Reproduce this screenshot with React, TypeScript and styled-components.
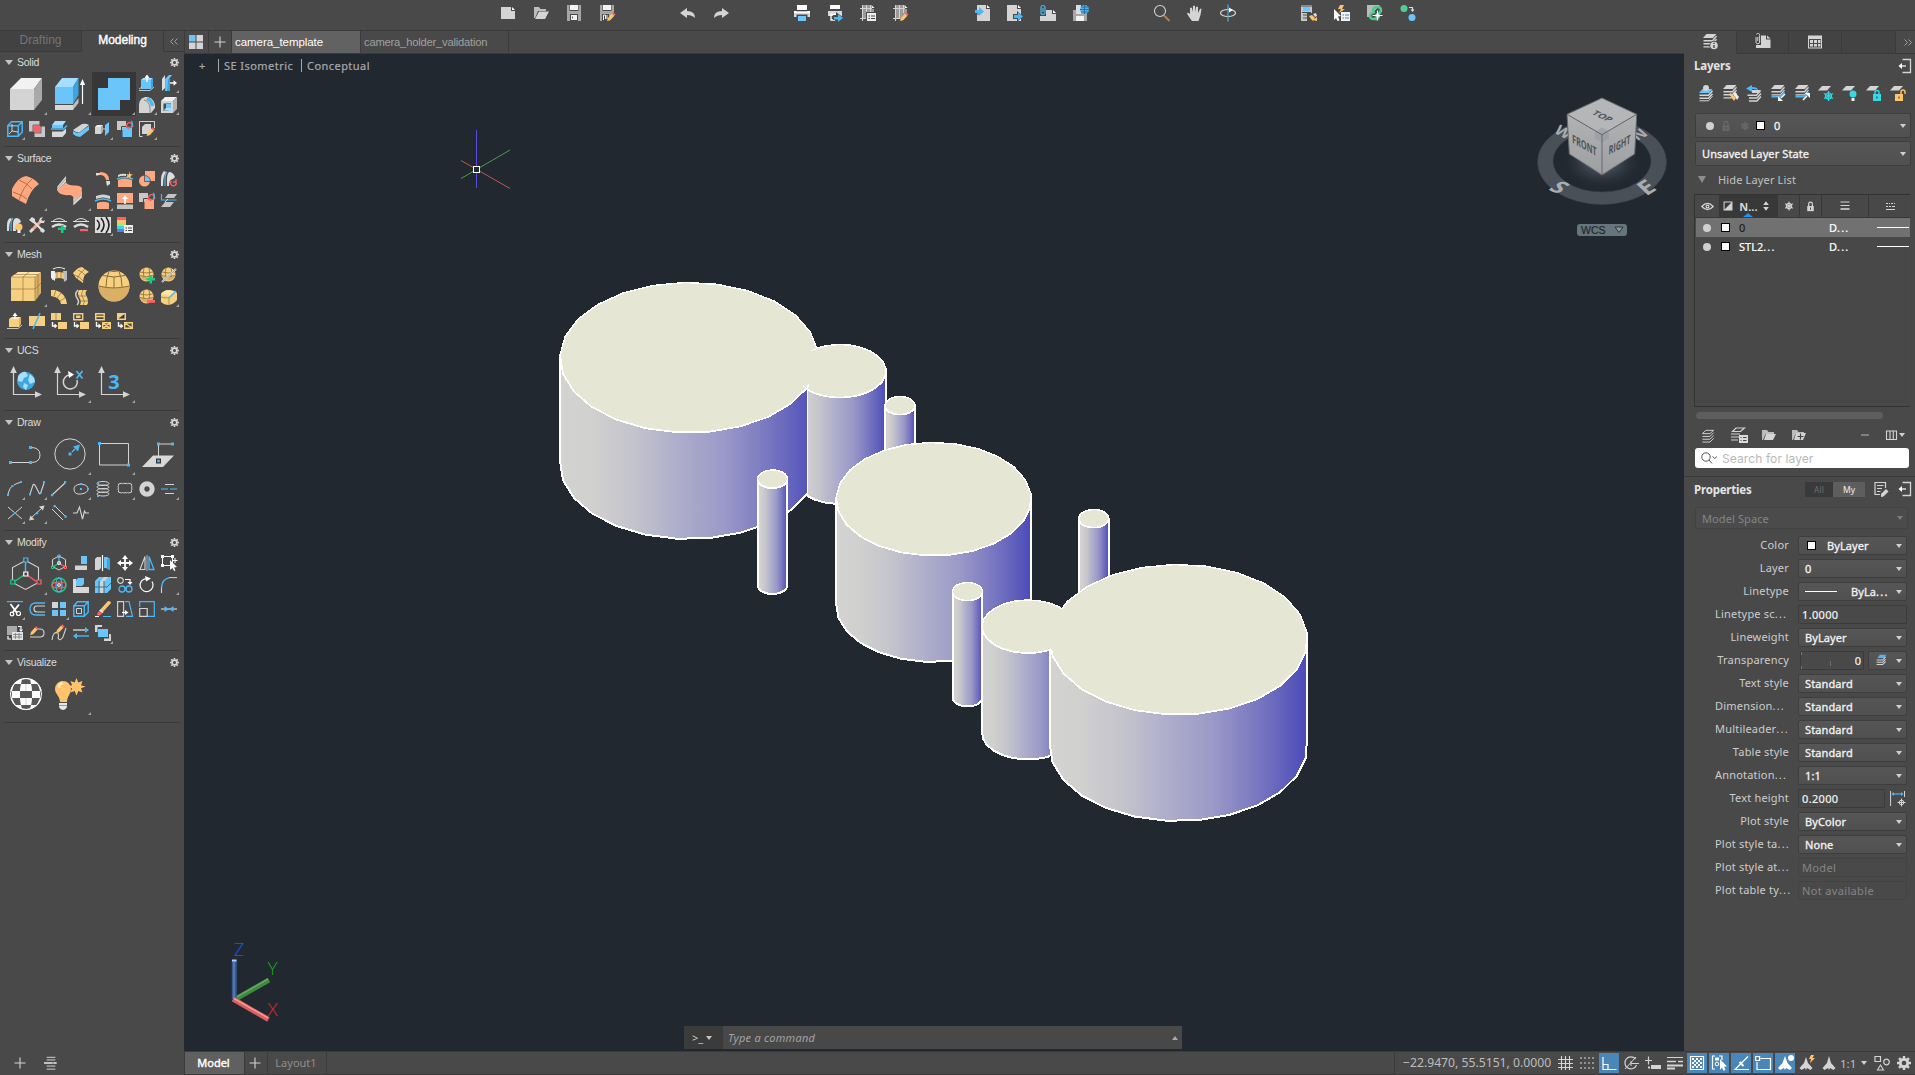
import React from "react";
import styled, { createGlobalStyle, css } from "styled-components";

/* ---------- palette ---------- */
const C = {
  panel: "#494949",
  line: "#3b3b3b",
  canvas: "#212830",
  grey: "#d4d4d4",
  mid: "#a8a8a8",
  white: "#ffffff",
  blue: "#69c5fa",
  sky: "#4bb8f5",
  deep: "#3ba5e0",
  pale: "#a5deff",
  peach: "#ffa87f",
  brown: "#a8664a",
  gold: "#f7cf80",
  goldD: "#d9b066",
  goldL: "#ffe6a8",
  goldS: "#8a6b33",
  red: "#ff5f66",
  green: "#12cf85",
  teal: "#35d8e4",
  amber: "#ffc46b",
};

const LUCIDA = '"Noto Sans", "Open Sans", sans-serif';
const HELV = '"Liberation Sans", Arial, sans-serif';

/* ---------- icon drawing ---------- */
type Shape = [d: string, fill: string, stroke?: string, width?: number];
const f = (d: string, c: string = C.grey): Shape => [d, c];
const s = (d: string, c: string = C.grey, w = 1): Shape => [d, "none", c, w];
const o = (x: number, y: number, r: number, ry: number = r) =>
  `M${x - r} ${y}a${r} ${ry} 0 1 0 ${2 * r} 0a${r} ${ry} 0 1 0 ${-2 * r} 0z`;
const q = (x: number, y: number, w: number, h: number) => `M${x} ${y}h${w}v${h}h${-w}z`;

const sheet = (y: number) => `M4.5 ${y}h10l-3.5 4h-10z`;
const sheetEdge = (y: number) => `M1.5 ${y + 3.8}h9l4-4.6`;
const pencil = (x: number, y: number): Shape[] => [
  f(`M${x} ${y + 8}l1-3 4-4.5 2.4 2.2-4.2 4.5z`, C.amber),
  f(`M${x + 5} ${y + 0.6}l1.2-1.4 2.4 2.2-1.2 1.4z`, C.red),
];
const ball = (): Shape[] => [
  f(o(7.5, 7.5, 7), C.gold),
  f("M1 9a7 7 0 0 0 13 0q-6 2.5-13 0z", C.goldD),
  s("M1 5q6.500 2 13 0M.6 8.500q7 2.500 13.800 0M5 1q-1.500 4 0 9M10 1q1.500 4 0 9", C.goldS, 0.8),
];
const axes = (): Shape[] => [
  s("M3.500 5v23.500h25", C.grey, 1.2),
  f("M3.500 0l3.300 7h-6.600zM32 28.500l-7-3.300v6.600z", C.grey),
];
const swapArrow = (x: string): Shape[] => [s("M10.500 7a3 3 0 1 1 4.500-.5", x, 1.3), f("M9 5.500h3.500v3.500z", C.red)];

const ICONS: Record<string, Shape[]> = {
  /* large 32px */
  box: [f("M0 11L11 0h21l-8 11z", "#f2f2f2"), f("M0 11h24v21H0z", "#d4d4d4"), f("M24 11l8-11v22l-8 10z", "#a9a9a9")],
  extrude: [
    f("M1 27h18v5H1z", "#d8d8d8"), f("M19 27l5.500-7v5l-5.500 7z", "#bdbdbd"),
    f("M1 9L8 0h16.500L19 9z", C.pale), f("M1 9h18v17H1z", C.blue), f("M19 9l5.500-9v17L19 26z", C.deep),
    s("M28.500 4v22", C.white, 1.2), f("M28.500 1l2.600 6h-5.200z", C.white),
  ],
  union: [f("M10 0h22v22h-10v10H0V10h10z", C.blue)],
  patch: [
    f("M2 15Q8 3 16 2q8 2 13 8Q20 16 16 30 8 26 2 22z", C.peach),
    s("M9 6q8 3 13 9M3 18q9 3 14 7M22 5q-9 8-13 21", C.brown, 0.9),
  ],
  loft: [
    f("M3.300 12.500L12 2v6L3.300 17zM19.300 25l8.500-7.500v6.200L19.300 31.500z", C.grey),
    s("M3.500 14.500L12 4.500M19.500 28l8-7.500", "#8a8a8a", 0.6),
    f("M3.300 16.500L12 8.500q2 3 8 3 5-.5 7.800 2v7L19.300 26q1-4.500-4-5-9 1-12-4.500z", C.peach),
  ],
  meshbox: [
    f("M1 7l7-5h23l-6 5z", C.goldL), f("M1 7h24v24H1z", C.gold), f("M25 7l6-5v21l-6 8z", C.goldD),
    s("M1 19h24l6-6M13 31V7l6-5M1 7h24v24M4 4.500h24v22", C.goldS, 0.6),
  ],
  meshball: [
    f(o(16, 16, 15.500), C.gold), f("M.5 16a15.500 15.500 0 0 0 31 0q-15 5-31 0z", C.goldD),
    s("M5 5.500q11 3 22 0M.7 16q15 4 30.600 0M11 1.500Q8 8 8 17M21 1.500q3 6.500 3 15.500M16 7v11M12 1q4 1 8 0", C.goldS, 1),
  ],
  ucsworld: [
    ...axes(), f(o(16, 15, 9), "#3ba7de"),
    f("M8 10q4-5 8-4l2 4-4 2-2 4-4-1zM20 8l4 4 1 4-5 2-2-4zM14 17l4 2-2 5-3-3z", C.pale),
  ],
  ucsx: [...axes(), s("M16 9a7 7 0 1 0 7 5", C.grey, 1.5), f("M14 5l6 3.500-5 3.500z", C.white), s("M22.500 5l6 7.500M28.500 5l-6 7.500", C.sky, 1.8)],
  ucs3: [...axes()],
  polyline: [s("M0 24.500h21M21 9.500q9 0 9 7.500t-9 7.500", C.grey, 1), f(q(-1, 23, 3, 3) + q(19, 23, 3, 3) + q(19, 8, 3, 3), C.sky)],
  circle: [s(o(16, 16, 15.200), C.grey, 1), f(q(14.500, 14.500, 3, 3), C.sky), s("M18 14l3-3", C.sky, 1.4), f("M26 6.500l-2 7-5-5z", C.sky)],
  rectangle: [s("M1.500 5.500h29v21.500h-29z", C.grey, 1), f(q(0, 4, 3, 3) + q(29, 25.500, 3, 3), C.sky)],
  planar: [f("M0 29l11-11.500h21L21 29z", "#d8d8d8"), s("M16.500 6v15M16.500 6h14", C.grey, 1), f(q(15, 4.500, 3, 3) + q(29, 4.500, 3, 3), C.sky), f(q(14, 20.500, 5, 5), "#333"), f(q(15.200, 21.700, 2.600, 2.600), C.sky)],
  gizmo: [
    s("M15.500 2.500L28.500 9.500v15l-13 7-13-7v-15z", C.grey, 1.1), s("M15.500 4v10", C.sky, 1.4), s("M15.500 16l-11 7.500", C.green, 1.4), s("M15.500 16l11 7.500", C.red, 1.4),
    ["M13.800 0h4v4h-4z", C.panel, C.sky, 1.2], ["M13.800 14h4v4h-4z", C.panel, C.white, 1.2], ["M.8 22h4v4h-4z", C.panel, C.green, 1.2], ["M27 22h4v4h-4z", C.panel, C.red, 1.2],
  ],
  checker: [
    f(o(16, 16, 16), C.white),
    f("M12 1h8l1 5h-10zM4 6h7l-1 7H2zM21 6h7l2 7h-8zM10 13h4.500v0zM0 13h2v7H0zM10 13h12v7H10zM30 13h2v7h-2zM2 20h8l1 7H5zM22 20h8l-3 7h-6zM11 27h10l-1 4h-8z", "#585858"),
    f("M11 6h10l1 7H10zM10 20h12l-1 7H11zM2 13h8v7H2zM22 13h8v7h-8z", C.white),
    f("M5 8h3v4H4zM24 8h3l1 4h-4z", "#585858"), f("M13.500 7h5v5h-5zM13.500 21h5v5h-5z", C.white), s(o(16, 16, 15.500), C.white, 1),
    s("M16 6v7M16 20v7", "#8a8a8a", 0.4),
  ],
  light: [
    f("M1 11a8 8 0 0 1 16 0c0 5-4 7-4 13H6C6 18 1 16 1 11z", C.amber), f("M5 25h8v3q0 3-4 4-4-1-4-4z", "#e8e8e8"), s("M5 27.500h8", "#999", 1),
    f("M22.500 0l1.800 4.500L28.500 3l-1.500 4.200L31.500 8.500 27 10.300l1.500 4.200-4.200-1.500L22.500 17.500l-1.800-4.500-4.200 1.500 1.500-4.200L13.500 8.500 18 7.200 16.500 3l4.200 1.500z", C.amber),
    f("M4 9q0-4 4-5l1 2q-3 1-3 4z", "#ffedc0"),
  ],

  /* solid */
  presspull: [f("M2 5l2-2h10l-2 2z", C.pale), f("M2 5h10v9H2z", C.blue), f("M12 5l2-2v9l-2 2z", C.deep), s("M8 7V2", C.white, 1.4), f("M8 -.5l2.500 3.500h-5z", C.white), s("M0 15.500h11l4-3.500M0 14l3-2", C.grey, 0.9)],
  offsetface: [f("M1 4l3-4v13l-3 3z", "#ddd"), f("M4 4l4-4h3L8 4v12H4z", C.blue), s("M4.500 4.500v11", C.sky, 1), f("M7 4h2v12H6z", C.deep), s("M9 8h5", C.white, 1.4), f("M16 8l-3.500-2.800v5.600z", C.white)],
  filletedge: [f("M0 16V8q0-6 6-8h3q6 2 7 8v3l-4 5z", "#d4d4d4"), s("M8 1.500q4.500 2 5.500 7.500", C.sky, 3.500), s("M5 3q5 1 6 8v5", "#777", .8)],
  shell: [f("M0 4l4-4h12l-4 4z", "#f0f0f0"), f("M0 4h12v12H0z", "#d4d4d4"), f("M12 4l4-4v12l-4 4z", "#b0b0b0"), f("M2.500 6.500h7.500v7.500H2.500z", C.panel), f("M5 7h5v4H5z", C.blue), f("M2.500 13.500L5 11h5v3z", C.pale)],
  slicebox: [s("M.8 4.800h10.500v10.500H.8zM.8 4.800L4.500.8h10.700v10.500l-4 4M11.300 4.800l4-4", C.sky, 1.5), s("M5 3v7l6 1M5 10l-3 3", C.grey, 1)],
  subtract: [f("M0 0h10.500v10.500H0zM5.500 5.500H16V16H5.500z", "#c8c8c8"), f("M4.500 4.500h7v7h-7z", C.red), s("M4 4h8v8H4z", C.panel, 0.7)],
  slice: [f("M1 4l3-4h11l-3 4z", C.pale), f("M1 4h11v3H1z", C.blue), s("M0 8h12.500L16 4.500", C.sky, 1.6), f("M1 10.500h10.500l3.500-3v4.500L11.500 16H1z", "#d8d8d8")],
  thicken: [f("M0 9l9-6q4-1 7 1L7 11q-4 1-7-2z", "#d4d4d4"), f("M0 10q4 3 7 1l9-6v4l-9 7q-4 0-7-3z", C.blue)],
  extractplane: [f("M0 6l2-2h6l-2 2z", "#eee"), f("M0 6h6v7H0z", "#d4d4d4"), f("M6 6l2-2v7l-2 2z", "#aaa"), s("M8 8h2", C.grey, 1), f("M10 4l4-3v10l-4 4z", C.blue)],
  convertsolid: [f("M0 0h9v9H0z", "#c8c8c8"), f("M5.500 6.500H15V16H5.500z", C.blue), s("M4.500 12V5.500H12", C.panel, 1), ...swapArrow(C.red), s("M14 0q3 3 0 6", C.sky, 1.2)],
  editsolid: [s("M3 .5H.5V15.500h3M13 .5h2.500V7M.5 .5h15", C.grey, 1), f("M3 6l3-3h6v6l-3 4H3z", "#d4d4d4"), ...pencil(7.500, 7)],

  /* surface */
  surfblend: [f("M1 2h5q-1 3-5 2.500z", "#ddd"), f("M5 1q9 0 9 8h-3q-1-5-6-5z", C.peach), f("M11 10h4v3l-3 2z", "#ddd")],
  surfpatch: [f("M1 9q6-3 14 0v7H1z", C.peach), s("M0 8q8-3 16 0", C.sky, 1.5), f("M1 4q4-2 8-1v2q-4-1-8 1z", "#ddd"), f("M12 0l1 3 3 .5-2.500 1.500.5 3-2-2-3 1 1.500-2.500L9 3l3 .5z", C.amber)],
  surftrim: [f("M6 0h10v10H6z", C.peach), f(o(5.500, 10, 5.500), C.peach), f("M6 5a5.500 5.500 0 0 1 5 5H6z", C.blue), s("M5.500 4.500v6h6a6 6 0 0 0-6-6z", "#5a4a44", 0.8)],
  surfuntrim: [f("M0 15V9q0-6 3-9l2 1q-3 4-3 14z", "#ddd"), s("M4 15V8q0-5 2-7", C.sky, 1.2), f("M6 15V8q0-5 2-7 4 0 6 5l-2 2q-4 0-4 7z", "#ddd"), s("M10.500 10a2.800 2.800 0 1 0 4.500 1M15 8v3h-3", C.red, 1.3)],
  surfextend: [f("M1 3q7-3 14 0v3Q8 3 1 6z", "#d4d4d4"), s("M0 8q8-4 16 0", C.sky, 1.5), f("M2 10q6-2.500 12 0v6H2z", C.peach)],
  surfsculpt: [f("M0 0h16v10H0z", C.peach), f("M0 11.500h16V16H0z", "#c4c4c4"), s("M8 11V5", C.white, 1.6), f("M8 2l3 4H5z", C.white)],
  surfconvert: [f("M0 0h9v9H0z", "#c8c8c8"), f("M5.500 6.500H15V16H5.500z", C.peach), s("M4.500 12V5.500H12", C.panel, 1), ...swapArrow(C.red), s("M14 0q3 3 0 6", C.sky, 1.2)],
  surfproject: [s("M.5 1v6h15", C.sky, 1.2), f("M7 1h9l-3 4H4zM4 9h9l-4 5H0z", "#c4c4c4"), s("M4 9l3-3", C.grey, 1)],
  surfanalysis: [f("M0 14V8q0-5 3-7l2 1q-3 3-3 12z", "#ddd"), s("M4 14V7q0-4 2-6", C.sky, 1.2), f("M6 14V7q0-5 3-6 4 0 5 4l-3 2q-3 1-2 7z", "#ddd"), f(o(12, 10, 3.500), C.amber), f("M10.500 13h3v3h-3z", "#eee")],
  surftools: [s("M3 13L12.500 3.500", C.peach, 3), s("M3 3l10 10", "#ddd", 2.400), f("M0 3l3-3 3 2v3L4 6zM12 12l2-1 2 3-2 2-3-2zM0 14l3-3 2 2-3 3zM11 1l3-1-2 3 2 1 2-1-1 3h-3l-2-2z", "#ddd")],
  cvadd: [s("M0 4.500h16", "#ddd", 1), s("M2 4q6-5 12 0", "#ddd", 1), s("M1 10q7-5 14 0", "#ddd", 2.500), f("M10 8h2.500v2.500H15V13h-2.500v3H10v-3H7v-2.500h3z", C.green)],
  cvremove: [s("M0 4.500h16", "#ddd", 1), s("M2 4q6-5 12 0", "#ddd", 1), s("M1 10q7-5 14 0", "#ddd", 2.500), f("M7 12h8v2.200H7z", C.red)],
  zebra: [f("M0 0h16v16H0z", "#ddd"), s("M2 3q5 5 0 10M6 1q6 7 0 14M11 0q6 8 0 16", "#222", 1.6)],
  analysisopt: [f("M0 0h9v3H0z", C.red), f("M0 3h9v3H0z", C.amber), f("M0 6h9v3H0z", "#a8e86a"), f("M0 9h9v3H0z", C.teal), f("M0 12h9v3H0z", "#5a7cf0"), f("M7 8h9v8H7z", "#eee"), s("M8.500 11h1.500M11 11h4M8.500 13.500h1.500M11 13.500h4", "#444", 1)],

  /* mesh */
  meshrev: [f("M1 7q7-4 14 0v6q-7-4-14 0z", C.gold), f("M0 4h4v10l-4-3z", "#eee"), f("M12 4h4v9l-3 2z", "#bbb"), s("M2 2q6-3 12 0", "#eee", 1.2), s("M6 5v6M10 5v6", C.goldS, 0.7)],
  meshedge: [f("M0 6q5-6 9-6l7 5q-6 2-6 11L3 11z", C.gold), s("M5 3q5 2 7 5M1 8q6 1 9 6M12 2Q6 6 4 12", C.goldS, 0.7)],
  meshtab: [f("M0 1h4q11 3 12 14h-6Q9 8 0 7z", C.gold), s("M5 1L3 7M10 4L6 9M14 9l-5 3", C.goldS, 0.7)],
  meshrule: [f("M6 1h8q-3 3 0 7 2 5 0 8H7q2-4-1-8-2-4 0-7z", C.gold), s("M5 1q-4 4-1 8t0 7", "#ccc", 1.500), s("M10 1q-3 4 0 8t0 7M5 7h8M7 12h8", C.goldS, 0.7)],
  smoothmore: [...ball(), f("M10.500 8h2.500v3h3v2.500h-3v3h-2.500v-3h-3V11h3z", C.green)],
  smoothless: [...ball(), f("M8 11h8v2.800H8z", C.red)],
  meshrefine: [...ball(), s("M1 15L15 2", "#ddd", 2), s("M1 15L15 2", "#777", 0.6)],
  meshcrease: [f("M0 5q3-4 8-4 5 0 8 3v7q-3 4-8 5-5 0-8-3z", C.gold), f("M0 5q3-4 8-4l7 2-7 4z", C.goldL), s("M8 9L15 2", C.sky, 1.500), s("M0 8q4 1 8 1v7", C.goldS, 0.6)],
  meshextrude: [f("M2 6l3-2h9l-2 2z", C.goldL), f("M2 6h10v8H2z", C.gold), f("M12 6l2-2v7l-2 3z", C.goldD), s("M8 6V2", C.white, 1.4), f("M8 -.5l2.500 3.500h-5z", C.white), s("M0 15.500h11l4-3.500", C.grey, 0.9)],
  meshsplit: [f("M0 3h16v10H0z", C.gold), s("M4 16L11 0", C.sky, 1.500)],
  meshmerge: [f("M0 0h10v7H0zM7 9h9v7H7z", C.gold), s("M5 0v7", C.goldS, 0.7), s("M1.500 9v4H4", C.white, 1.4), f("M3.500 10.500L6.500 13l-3 2.500z", C.white)],
  meshcap: [s("M.7 .7h9v6h-9z", C.gold, 1.4), f("M3 2.500h4.500v2.500H3z", C.gold), f("M7 9h9v7H7z", C.gold), s("M1.500 9v4H4", C.white, 1.4), f("M3.500 10.500L6.500 13l-3 2.500z", C.white)],
  meshcollapse: [s("M.7 .7h8.500v6H.7zM.7 3.500h8.500M7.700 9.700h7.600v5.600H7.700zM8 10l7 5M15 10l-7 5", C.gold, 1.4), s("M1.500 9v4H4", C.white, 1.4), f("M3.500 10.500L6.500 13l-3 2.500z", C.white)],
  meshspin: [f("M0 0h9v7H0z", C.gold), f("M1.500 5.500L7.500 1v4.500z", "#3a3a3a"), s("M7.700 9.700h7.600v5.600H7.700zM8 10l7 5", C.gold, 1.4), s("M1.500 9v4H4", C.white, 1.4), f("M3.500 10.500L6.500 13l-3 2.500z", C.white)],

  /* draw */
  arc: [s("M1 13Q2.500 6 6 4.500M7 4Q10 2 13 1.500", C.grey, 1), f(q(0, 13, 2, 2) + q(13, 0, 2, 2) + q(4.500, 4, 2, 2), C.sky)],
  spline: [s("M1 13L4 4q1-2 3 2l3 6q1 2 2-1l3-9", C.grey, 1.1), f(q(0, 12.500, 2, 2) + q(11, 10.500, 2, 2) + q(14, 0, 2, 2), C.sky)],
  line: [s("M1 14L14 2", C.grey, 1.1), f(q(0, 13, 2.200, 2.200) + q(13, 0, 2.200, 2.200), C.sky)],
  ellipse: [s("M9 3.200q6 .8 6 4.800t-7 5-7-5q0-4 6-4.800", C.grey, 1), f(q(7, 2, 2, 2) + q(14, 7, 2, 2) + q(7, 7, 2, 2), C.sky)],
  helix: [s(o(8, 2.500, 6, 2) + o(8, 6, 6, 2) + o(8, 9.500, 6, 2) + o(8, 13, 6, 2), C.grey, 1), f(q(2, 14, 2, 2) + q(2, 1, 2, 2), C.sky)],
  cloud: [s("M1.500 4.500q-1-2 1.500-1.800 1.200-1 2.500 0 1.200-1 2.500 0 1.200-1 2.500 0 1.200-1 2.500 0 2.500-.2 1.500 1.800 1 1.200 0 2.400 1 1.200 0 2.400 1 2.400-1.500 2.200-1.200 1-2.500 0-1.200 1-2.500 0-1.200 1-2.500 0-1.200 1-2.500 0-2.500.2-1.500-2.200-1-1.200 0-2.400-1-1.200 0-2.400z", C.grey, 1)],
  donut: [s(o(8, 8, 5.200), C.grey, 5)],
  multiline: [s("M4 3.500h9M4 12.500h9", C.grey, 1.1), s("M0 8h7M9 8h7", C.sky, 1.2)],
  xline: [s("M1 2l14 12M15 2L1 14", C.grey, 1), f(q(7, 7, 2.200, 2.200), C.sky)],
  ray: [s("M2 13L13 3", C.grey, 1), f("M15.500 .5l-1.500 5-4-4zM0 15.500l1.500-5 4 4z", C.grey), f(q(7, 7, 2.200, 2.200), C.sky)],
  parallel: [s("M1 4l11 11M4 1l11 11", C.grey, 1), f(q(2.500, 0, 2.200, 2.200) + q(13.500, 10.500, 2.200, 2.200), C.sky)],
  breakline: [s("M0 8h4l2.500-6 3 12 2-8 1 2H16", C.grey, 1.100)],

  /* modify */
  move3d: [s("M8 1L14.500 4.500v7L8 15l-6.500-3.500v-7z", C.grey, 1), s("M8 2v6", C.sky, 1.1), s("M8 8L2 12", C.green, 1.1), s("M8 8l6 4", C.red, 1.1), s(q(6.800, 0, 2.500, 2.500), C.sky, 1), s(q(6.800, 6.800, 2.500, 2.500), C.white, 1), s(q(.5, 11, 2.500, 2.500), C.green, 1), s(q(13, 11, 2.500, 2.500), C.red, 1)],
  align: [f("M8 1h6v8H8z", C.blue), f("M2 10.500h12V15H2z", "#d4d4d4")],
  mirror3d: [f("M0 4l2-2h4v11l-2 2H0z", "#d4d4d4"), s("M7.500 0v16", C.white, 1.2), f("M9 2h3l3 2v11l-4-2H9z", C.blue), f("M12 4h3v11l-3-1z", C.deep)],
  move: [s("M8 2v12M2 8h12", C.white, 1.8), f("M8 0l3 4H5zM8 16l3-4H5zM0 8l4-3v6zM16 8l-4-3v6z", C.white)],
  mirror: [s("M6 1.500V14.500H1z", C.grey, 1.1), s("M10 1.500V14.500h5z", C.sky, 1.3), s("M8 0v16", C.grey, 0.8)],
  select: [s("M1.500 1.500h10v9h-10z", C.white, 1), f(q(0, 0, 3, 3) + q(10, 0, 3, 3) + q(0, 9, 3, 3), C.white), s("M14 3v5M11.500 5.500h5", C.white, 1), f("M9 5l7 7-3 .5 1.500 3-1.500.5-1.500-3L9 15z", C.white)],
  rotate3d: [s(o(8, 8, 7), C.green, 1.5), s(o(8, 8, 3, 7), C.sky, 1.2), s(o(8, 8, 7, 3), C.red, 1.2), s(q(6.800, 6.800, 2.400, 2.400), C.white, 1)],
  alignbox: [f("M0 2h3v8h13v6H0z", "#d8d8d8"), f("M3 3l2-2h6v6l-2 2H3z", C.blue)],
  array3d: [f("M0 4l4-4h12v12l-4 4H0z", C.blue), f("M5 5l4-5h4L9 5v11H5z", "#d4d4d4"), s("M0 10h12l4-4M4 4v12M9 4v12", "#3d6d8c", 1)],
  copy: [s(o(3.500, 3.500, 2.800), C.grey, 1.2), s(o(5, 12, 3) + o(12, 12, 3), C.sky, 1.300), s("M8 2.500h5v3", C.white, 1.2), f("M13 8l-2.500-3h5z", C.white)],
  rotate: [s("M13 4.500A6.500 6.500 0 1 1 7 1.600", C.white, 1.2), f("M6 -1l6 2.500-5 3z", C.white)],
  fillet: [s("M.5 16V9", C.grey, 1.1), s("M.5 11Q1 2 8 .8", C.sky, 1.3), s("M8 .6h8", C.grey, 1)],
  trim: [["M0 .6h16", "none", C.sky, 1.200], s("M3.500 3l6.500 9M12 3.500L6 11", C.white, 1.800), s(o(5, 13, 1.800) + o(11.500, 12.500, 2), C.white, 1.200)],
  offset: [s("M16 2H7Q1 2 1 8t6 6h9", C.sky, 1.3), s("M16 5H8Q5 5 5 8t3 3h8", C.grey, 1.1)],
  arrayrect: [f(q(1, 1, 6, 6), "#d4d4d4"), f(q(9, 1, 6, 6) + q(1, 9, 6, 6) + q(9, 9, 6, 6), C.blue)],
  offsetedge: [s("M.8 4.800h10.500v10.500H.8zM.8 4.800L4.500.8h10.700v10.500l-4 4M11.300 4.800l4-4", C.sky, 1.4), s("M3.500 7.500h5v5h-5z", C.grey, 1)],
  erase: [f("M4 10L13 0q3 0 3 2L7 12z", C.amber), f("M2 13l2-3 3 2.500-2 2q-3 .5-3-1.500z", C.red), f("M4.500 9.500l1-1 3 2.500-1 1z", "#eee"), s("M0 15.500h4", C.white, 1), s("M8 15.500h8", C.sky, 1)],
  stretch: [s("M.6 .6h6v14.800h-6z", C.grey, 1.100), s("M8 .6h4l3.500 14.800H9", C.sky, 1.200), s("M5 11.500h4", C.white, 1.3), f("M11.500 11.500L8 9v5z", C.white)],
  scale: [s("M.7 6V.7h14.600v14.600H9", C.sky, 1.200), s("M.7 7.500h7.500v7.800H.7z", C.grey, 1.200)],
  join: [s("M0 8h16", C.grey, 1.2), f("M8 8L3.500 5v6zM8 8l4.500-3v6z", C.sky)],
  convmesh: [f("M0 1h10v9H0z", "#aaa"), f("M5 7h11v8H5z", "#e4e4e4"), s("M6 9.500h9M6 12h9M8.500 8v6M12 8v6", "#777", .8), s("M11 1.500h3v3M1 11v3h3", C.white, 1.2), f("M14 7l-2-2.500h4z", C.white)],
  pedit: [s("M5 4h6q4 0 4 4t-4 4H1", C.grey, 1.1), ...pencil(1, 2)],
  splineedit: [s("M1 15q1-9 6-7 1 3 0 5 2 4 5-1l3-9", C.grey, 1.1), ...pencil(5, 0)],
  reverse: [s("M0 5h13", C.grey, 1.4), s("M3 11h13", C.sky, 1.4), f("M16 5l-4-3v6z", C.sky), f("M0 11l4-3v6z", C.sky)],
  draworder: [f("M0 0h7v2H2.500v5H0zM9 16v-2.500h5V9h2v7z", "#d4d4d4"), f("M3 4h10v8H3z", C.blue)],

  /* top toolbar */
  new: [f("M1 2h10v4h4v8H1z"), f("M12 2l3 3h-3z", "#fff")],
  open: [f("M1 2h5l1.500 2H13v2H5L2 13H1z", "#bdbdbd"), f("M6 6.500h10L12 14H2z")],
  save: [f("M1 0h14v16H1z", "#a6a6a6"), f("M3.500 0h9v6h-9z", C.panel), f("M4 0h8v5H4z", "#f2f2f2"), f("M4 9h8v7H4z", C.panel), f("M5 10h6v5H5z", "#f2f2f2"), s("M6.500 11.500v2", "#555", 1)],
  saveas: [f("M1 0h14v7l-5 9H1z", "#a6a6a6"), f("M3.500 0h9v6h-9z", C.panel), f("M4 0h8v5H4z", "#f2f2f2"), f("M3 9h7v7H3z", C.panel), s("M4.500 15v-5h2v4M8 14v-4", "#eee", 1), ...pencil(8, 8)],
  undo: [f("M0 8l7-5v3q8 0 8 7-3-3-8-3v3z")],
  redo: [f("M16 8L9 3v3q-8 0-8 7 3-3 8-3v3z")],
  print: [f("M3 0h10v5H3z", "#fff"), f("M0 6h16v6H0z", "#d8d8d8"), f("M0 6h16v2H0z", "#fff"), s("M2.500 5.800h11", "#333", 0.8), f("M2.500 9.500h11V16h-11z", C.panel), f("M4 11h8v5H4z", C.blue)],
  plot: [f("M3 0h10v4H3z", "#fff"), f("M1 6h14v5H1z", "#d8d8d8"), s("M4 9.500h6M4 9v6h4", "#fff", 1.3), f("M6 10h3V7l8 6-8 5v-3H6z", C.panel), f("M7 12h4V9l5 4-5 4v-2.500H7z", C.sky)],
  pagesetup: [f("M3 0h8v4h3v4H7v6H3z", "#9a9a9a"), s("M2.500 0v16M6.500 0v14M0 3.500h12M0 13.500h7M10.500 0v8", C.grey, 1), f("M11.500 0l3 3h-3z", "#fff"), f("M6 7h11v10H6z", C.panel), f("M7 8h9v8H7z", "#eee"), s("M8.500 11h1.500M11 11h4M8.500 13.500h1.500M11 13.500h4", "#444", 1)],
  plotstyle: [f("M3 0h8v4h3v4l-5 6H3z", "#9a9a9a"), s("M2.500 0v16M6.500 0v14M0 3.500h12M0 13.500h7M10.500 0v8", C.grey, 1), f("M11.500 0l3 3h-3z", "#fff"), ...pencil(7, 8)],
  importf: [f("M3 0h9v4h4v12H3z"), f("M13 0l3 3h-3z", "#fff"), s("M2.500 0v4H1v5h4", C.panel, 1), f("M1 5h4V2l5 4.500L5 11V8H1z", C.sky)],
  exportf: [f("M0 0h10v4h4v12H0z"), f("M11 0l3 3h-3z", "#fff"), f("M6 9h4V6l6 5.500L10 17v-3H6z", C.panel), f("M7 10h4V7.500l5 4-5 4V13H7z", C.sky)],
  attach: [f("M6 5h6v4h4v7H0v-5h6z"), f("M13 5l3 3h-3z", "#fff"), s("M1 2.500v5a2 2 0 0 0 4 0v-5a2 2 0 0 0-4 0M3 3v4", C.sky, 1.200)],
  savecloud: [f("M0 5h14v11H0z", "#a6a6a6"), f("M3 0h5v9H3z", "#ddd"), f("M3 11h8v5H3z", "#f2f2f2"), f(o(11.500, 4.500, 4.500), C.sky), s("M7 4.500h9M11.500 0v9M8 2h7M8 7h7", "#25608a", .8)],
  zoom: [s(o(6, 6, 5.500), C.grey, 1.100), s("M10 10.500L15.500 16", "#b87e50", 2)],
  pan: [f("M5 16Q1 11 0 8q1-1 3 1L3 3q1-1 2 0l1 4V1q1-1 2 0v6l1-5q1-1 2 0v6l2-4q1-1 1.500 0-.5 6-3 12z")],
  orbit: [s(o(8, 8, 7.500, 3.500), C.grey, 1.200), s("M8 -.5v17", C.sky, 1.100), f("M9 2.500l4 2.500-4 2.500z", "#fff")],
  props: [f("M0 0h11v16H0z", "#c8c8c8"), s("M1 7.500h9M0 1h11", C.panel, 1), f("M2 2h7v4H2z", C.blue), s("M2 10h4M2 13h4", "#555", 1.2), f("M6 8h10v8H6z", C.panel), f("M8 11l3-1 3 3-2 3-2-2z", C.amber), f("M12 9l3-1 1 3-2 1z", "#ddd"), f("M12 15l4-3v4z", C.amber)],
  quickselect: [f("M6 0h4L8 4h3L5 8l2-4H4z", C.amber), f("M0 4l7 7-3 .5 1.500 4-2 .5L2 13l-2 2z", "#fff"), f("M7 7h9v9H7z", "#f2f2f2"), s("M8.500 10h1.500M11 10h4M8.500 13h1.500M11 13h4", "#2a8fd0", 1.2)],
  geolocate: [f("M0 0h13L2 12H0z", "#bbb"), s("M6 6q0-4 4-4t4 3-4 4M8 7q-5 1-5 4t4 3 5-3", "#4ecb8c", 2.600), s("M10.500 5.500v10M5.500 10.500h10", "#fff", 1.1), s(o(10.500, 10.500, 1.800), "#fff", 1)],
  compare: [f(o(4, 3.500, 3.500), "#4fd092"), f(o(12, 12.500, 3.500), C.blue), s("M9 2.500h3.500V5", "#ddd", 1.2), f("M12.500 7l-2-2.500h4z", "#ddd")],

  /* layer palette */
  laycur: [f(sheet(4), C.blue), s(sheetEdge(6.500), C.grey, 1.500), s(sheetEdge(9.500), C.grey, 1.500), s(sheetEdge(12), C.grey, 1), f(o(8, 3, 3))],
  laymatch: [f(sheet(0)), s(sheetEdge(3), C.grey, 1.400), s(sheetEdge(6), C.grey, 1.400), s(sheetEdge(9), C.grey, 1.200), f("M7 9l2-1 5 5-2 3z", C.amber), f("M11 8l2-1 4 5-2 3z", "#eee")],
  layprev: [f("M6 5h9l-3 3H6z"), s(sheetEdge(6.500), C.grey, 1.400), s("M3 13h8l4-4.500M3 16h8l4-4.500", C.grey, 1.300), f("M0 3.500L6 0v2q6 0 6 3-3-1-6-1v3z", C.sky)],
  layiso: [f(sheet(0)), s(sheetEdge(3), C.grey, 1.400), s(sheetEdge(6), C.grey, 1.200), s(sheetEdge(8), C.sky, 1.500), s("M15 9l-4 4", C.white, 1.400), f("M8 16v-5l5 5z", C.white)],
  layuniso: [f(sheet(0)), s(sheetEdge(3), C.grey, 1.400), s(sheetEdge(6), C.grey, 1.200), s(sheetEdge(8), C.sky, 1.500), s("M9 15l4-4", C.white, 1.400), f("M16 8v5l-5-5z", C.white)],
  layfrz: [f("M4 1h9L9 5.500H0z"), s("M10.500 6v10M6 8.500l9 5M15 8.500l-9 5", C.teal, 1.400), s(o(10.500, 11, 3), C.teal, 1.200)],
  layoff: [f("M4 1h9L9 5.500H0z"), f(o(11, 9, 3.500), C.teal), f("M9.500 13h3v3h-3z", "#eee")],
  laylck: [f("M4 1h9L9 5.500H0z"), f("M7 9h8v7H7z", C.teal), s("M9 9V7.500a2 2 0 0 1 4 0V9", C.teal, 1.400), f(q(10.500, 11.500, 1, 2), "#333")],
  layulk: [f("M4 1h9L9 5.500H0z"), f("M5 9h8v7H5z", C.amber), s("M11 9V7a2 2 0 0 1 4 0v2", C.amber, 1.400), f(q(8.500, 11.500, 1, 2), "#333")],
  collapse: [s("M4.500 1.500h8v13h-8", C.grey, 1.300), s("M2 8h6", C.white, 1.200), f("M.5 8L4 5v6z", C.white)],
  tablayers: [f(sheet(0)), s(sheetEdge(3), C.grey, 1.400), s(sheetEdge(6), C.grey, 1.400), s(sheetEdge(9), C.grey, 1.200), f(o(12, 11.500, 4.600), C.panel), f(o(12, 11.500, 3.800)), f(q(11.300, 11, 1.400, 3) + q(11.300, 8.800, 1.400, 1.300), C.panel)],
  tabref: [f("M6 1.500h5v4h4.500v8.500H1v-3h5z"), f("M12 1.500l3.500 3H12z"), s("M1 3v5a1.800 1.800 0 0 0 3.600 0V1.500a1.500 1.500 0 0 0-3-1M2.800 3v4", C.grey, 1)],
  tabsheet: [f("M1 1.500h14v13H1z"), f("M2 5h12v8.500H2z", "#484848"), f(q(3, 6, 3, 3) + q(7, 6, 3, 3) + q(11, 6, 2.500, 3) + q(3, 10, 3, 2.500) + q(7, 10, 3, 2.500) + q(11, 10, 2.500, 2.500))],
  eye: [s("M1 8q7-7.500 14 0-7 7.500-14 0z", C.grey, 1.500), f(o(8, 8, 2.500)), f(o(8, 8, 1), "#444")],
  halfbox: [s("M3.500 3.500h9v9h-9z", C.grey, 1.200), f("M12.500 3.500v9h-9z")],
  updown: [f("M8 2.500l3.200 4.300H4.800zM8 13.500l3.200-4.300H4.800z")],
  snow: [s("M8 3v10M3.700 5.500l8.600 5M12.300 5.500l-8.600 5", C.grey, 1.300), s(o(8, 8, 3), C.grey, 1.200)],
  lock: [f("M4.500 7.500h7V13h-7z"), s("M6 7.500V5.300a2 2 0 0 1 4 0v2.200", C.grey, 1.300), f(q(7.500, 9, 1, 2.500), "#444")],
  weight: [s("M3.500 4h9M3.500 7.500h9", C.grey, 1), s("M3.500 11h9", C.grey, 1.600)],
  ltype: [["M3 5.500h2M6 5.500h1M8 5.500h2M11 5.500h1M3 8.500h2M6 8.500h2M9 8.500h3M3 11.500h9", "none", C.grey, 1]],
  laynew: [s("M5 2.500h8.500L9.500 6H1.500zM1.500 9h8l4-4M1.500 12h8l4-4M1.500 15h8l4-4", C.grey, 1)],
  laystate: [s("M5 1h8.500L9.500 4.500H1.500zM0 7h9M0 10h8M0 13h7", C.grey, 1.200), f("M8 8h9v8H8z", "#ddd"), s("M9.500 10.500h1M12 10.500h3.500M9.500 13.500h1M12 13.500h3.500", "#444", 1)],
  folder: [f("M1 3h5l1.500 2H13v2H4.500L2 13H1z", "#bdbdbd"), f("M5 7h10l-3 6H3z")],
  folderadd: [f("M1 3h5l1.500 2H13v2H4.500L2 13H1z", "#bdbdbd"), f("M5 6h10l-3 7H3z"), s("M9.500 6.500v6M6.500 9.500h6", "#444", 1.2)],
  columns: [s("M3.500 4h10v8.500h-10zM7 4v8.500M10.300 4v8.500", C.grey, 1.100)],
  editprops: [s("M12.500 7V1.500H2v12h5M4 4.500h6.500M4 7.500h5M4 10.500h3.500", C.grey, 1.200), f("M8 16v-3l5-5 2.500 2.500-5 5z")],
  layersmall: [f("M6 1h8l-3 4H3z", C.sky), s("M2 7.500h7.500L13 3.500M2 10.200h7.500L13 6.500M2 13h7.500L13 9.500", C.grey, 1.300)],
  picksize: [s("M.6 0v15M14.500 0v6", C.grey, 1), s("M2 3h11", C.sky, 1.200), f("M1.500 3l2.500-2v4zM13.500 3L11 1v4z", C.sky), s(o(11.500, 11.500, 2.300), C.grey, 1), s("M11.500 7.500v8M7.500 11.500h8", C.grey, 1)],

  /* status bar */
  grid: [s("M4.500 1v14M8.500 1v14M12.500 1v14M1 4.500h15M1 8.500h15M1 12.500h15", C.grey, 1.100)],
  dots: [f([3, 8, 13].map((y) => [2, 6, 10, 14].map((x) => q(x - 0.700, y - 0.700, 1.400, 1.400)).join("")).join(""))],
  ortho: [s("M2 2v12.500h13.500M2 9.500h5v5", C.white, 1.200)],
  polar: [s("M12.500 4A6 6 0 1 0 13.500 10", C.grey, 1.200), s("M2 14L13 2M8 8.500h8M8 6v5", C.grey, 1)],
  dyn: [s("M3.500 1.500v8M0 5.500h7", C.grey, 1.200), f(q(6, 10, 10, 4) + q(3, 11.500, 2, 2))],
  lw: [s("M0 2.500h16", C.grey, 1), s("M0 6.500h9", C.grey, 1.500), s("M11 6.500h5", C.grey, 1.500), s("M0 10.500h16M0 13.500h8", C.grey, 2)],
  transp: [s("M1.500 1.500h13v13h-13z", C.white, 1.200), f([0, 1, 2, 3, 4].map((r) => [0, 1, 2, 3, 4].filter((c) => (r + c) % 2 === 0).map((c) => q(3 + c * 2, 3 + r * 2, 2, 2)).join("")).join(""), C.white)],
  cycling: [s("M4 1H1.500v13H4M8 1h3v4", C.white, 1.200), f(q(4, 2.500, 4, 3), "#fff"), s(o(6, 9, 1.800), C.white, 1), f("M9 4l7 7.500-3 .3 1.500 3.200-2 .8-1.500-3.300L9 15z", C.white)],
  snap3d: [s("M15 1.500L2 14.500h14", C.white, 1.200), s("M6.500 7l4 4", C.white, 2)],
  osnap: [s("M5.500 3.500h10V14.500H2V7", C.white, 1.200), s(q(.6, 1.500, 4, 4), C.white, 1.200)],
  anno: [f("M8 1l2.500 7q1 1 4.500 5l-2 2-4-2-1 2-1-2-4 2-2-2q3.500-4 4.500-5z", "#fff"), f(o(14, 3, 3), "#fff")],
  annoauto: [f("M7 2l2 6q1 1 4.500 5l-2 2-3.500-2-1 2-1-2-3.500 2-2-2q3.500-4 4.500-5z"), f("M12 0h3l-1.500 3H16l-5 5 1-4h-2z", C.amber)],
  annoscale: [f("M8 1l2 7q1 1 4.500 5l-2 2-3.500-2-1 2-1-2-3.500 2-2-2Q5 9 6 8z")],
  isolate: [s("M1 1.500h5.500v5H1z", C.grey, 1.200), s(o(12.500, 7, 2.800), C.grey, 1.200), s("M6.500 10l3 5h-6z", C.grey, 1.100)],
  gear: [s(o(8, 8, 4.300), C.grey, 3.200), s("M8 0v3M8 13v3M0 8h3M13 8h3M2.300 2.300l2 2M11.700 11.700l2 2M13.700 2.300l-2 2M4.300 11.700l-2 2", C.grey, 2.800)],
  listmenu: [s("M3 1.500h10M3 4.500h10M3 11.500h10M3 15h10", C.grey, 1.100), s("M0 8h10", C.grey, 2), f(q(10.500, 7, 4, 2))],
  plus: [s("M8 2.500v11M2.500 8h11", C.grey, 1.100)],
  viewtiles: [f(q(1, 1, 6.500, 6.500), C.blue), f(q(8.500, 1, 6.500, 6.500) + q(1, 8.500, 6.500, 6.500) + q(8.500, 8.500, 6.500, 6.500))],
};

const IconSvg = styled.svg`
  display: block;
  flex: none;
  overflow: visible;
`;

function Icon({ name, size = 16, box = 16 }: { name: string; size?: number; box?: number }) {
  return (
    <IconSvg width={size} height={size} viewBox={`0 0 ${box} ${box}`} aria-hidden="true">
      {ICONS[name].map(([d, fill, stroke, width], i) => (
        <path key={i} d={d} fill={fill} stroke={stroke} strokeWidth={width} />
      ))}
      {name === "ucs3" && (
        <text x="16" y="23" textAnchor="middle" fontSize="20" fontWeight="700" fontFamily='"Open Sans", sans-serif' fill={C.sky}>3</text>
      )}
    </IconSvg>
  );
}

/* ---------- shell ---------- */
const Global = createGlobalStyle`
  * { box-sizing: border-box; }
  html, body { margin: 0; padding: 0; background: ${C.panel}; }
  body { overflow: hidden; font-family: ${LUCIDA}; font-size: 11px; color: ${C.grey}; }
  button { font: inherit; color: inherit; border: 0; padding: 0; background: none; }
`;

const Shell = styled.div`
  width: 1915px;
  height: 1075px;
  display: grid;
  grid-template: 30px minmax(0, 1fr) / 184px minmax(0, 1fr);
  background: ${C.panel};
`;

const Toolbar = styled.header`
  grid-column: 1 / -1;
  display: flex;
  align-items: center;
  justify-content: center;
  padding: 0 0 4px;
  gap: 65px;
`;
const ToolGroup = styled.div`
  display: flex;
  gap: 17px;
`;

/* ---------- left palette ---------- */
const Palette = styled.aside`
  display: flex;
  flex-direction: column;
  min-height: 0;
  border-top: 1px solid ${C.line};
  background: ${C.panel};
`;
const PaletteTabs = styled.div`
  display: flex;
  height: 21px;
`;
const PaletteTab = styled.button<{ $on?: boolean; $w: number }>`
  width: ${(p) => p.$w}px;
  font: 12px ${HELV};
  padding-bottom: 2px;
  color: ${(p) => (p.$on ? "#fff" : "#747474")};
  -webkit-text-stroke: ${(p) => (p.$on ? "0.4px #fff" : "0")};
  background: ${(p) => (p.$on ? C.panel : "#424242")};
  border-bottom: 1px solid ${(p) => (p.$on ? C.panel : C.line)};
  border-right: 1px solid ${C.line};
`;
const FoldMark = styled.button`
  flex: 1;
  display: grid;
  place-items: center;
  border-bottom: 1px solid ${C.line};
`;

const SectionBox = styled.section<{ $first?: boolean }>`
  padding: 0 4px 5px;
  margin-top: ${(p) => (p.$first ? -2 : 0)}px;
`;
const SectionHead = styled.div<{ $first?: boolean }>`
  display: flex;
  align-items: center;
  height: 22px;
  padding: 2px 1px 0 1px;
  border-top: 1px solid ${(p) => (p.$first ? "transparent" : C.line)};
  font: 10.500px ${HELV};
  letter-spacing: -0.25px;
  color: #dcdcdc;
`;
const SectionName = styled.span`
  flex: 1;
  padding: 0 0 1px 4px;
`;
const Caret = styled.i<{ $w?: number; $h?: number; $c?: string }>`
  flex: none;
  border: solid transparent;
  border-width: ${(p) => p.$h ?? 4}px ${(p) => (p.$w ?? 8) / 2}px 0;
  border-top-color: ${(p) => p.$c ?? "#c4c4c4"};
`;
const ToolBlock = styled.div`
  display: grid;
  grid-template-columns: repeat(8, 22px);
  grid-template-rows: 22px 22px;
  margin-bottom: 1px;
`;
const ToolRow = styled.div`
  display: flex;
  height: 24px;
`;
const Tool = styled.button<{ $big?: boolean; $on?: boolean; $more?: boolean }>`
  position: relative;
  display: grid;
  place-items: center;
  width: 22px;
  background: ${(p) => (p.$on ? "#373737" : "transparent")};
  ${(p) => p.$big && css`
    width: 44px;
    grid-row: span 2;
    grid-column: span 2;
  `}
  ${(p) => p.$more && css`
    &::after {
      content: "";
      position: absolute;
      right: 1px;
      bottom: 1px;
      border: solid transparent;
      border-width: 0 0 3.500px 3.500px;
      border-bottom-color: #a4a4a4;
    }
  `}
`;
const PaletteFoot = styled.div`
  margin-top: auto;
  display: flex;
  align-items: center;
  gap: 16px;
  padding: 0 12px 4px;
`;

/* A name may carry "!" for a large tile, "*" for a flyout corner, "@" for the active tool. */
function ToolTile({ spec }: { spec: string }) {
  const name = spec.replace(/[!*@]/g, "");
  const big = spec.includes("!");
  return (
    <Tool $big={big} $more={spec.includes("*")} $on={spec.includes("@")} aria-label={name}>
      <Icon name={name} size={big ? 32 : 16} box={big ? 32 : 16} />
    </Tool>
  );
}

const SECTIONS: { title: string; block: string; rows: string[] }[] = [
  { title: "Solid", block: "!*box !*extrude !*@union presspull *offsetface *filletedge *shell", rows: ["*slicebox subtract slice thicken *extractplane convertsolid *editsolid"] },
  { title: "Surface", block: "!*patch !*loft surfblend surfpatch surftrim surfuntrim *surfextend surfsculpt surfconvert surfproject", rows: ["*surfanalysis surftools cvadd cvremove *zebra analysisopt"] },
  { title: "Mesh", block: "!*meshbox meshrev meshedge !meshball smoothmore meshrefine meshtab meshrule smoothless *meshcrease", rows: ["meshextrude meshsplit meshmerge meshcap meshcollapse meshspin"] },
  { title: "UCS", block: "!ucsworld !*ucsx !*ucs3", rows: [] },
  { title: "Draw", block: "!polyline !*circle !*rectangle !planar", rows: ["*arc *spline line *ellipse helix *cloud donut *multiline", "*xline *ray parallel breakline"] },
  { title: "Modify", block: "!*gizmo move3d align mirror3d move mirror select rotate3d alignbox array3d copy rotate *fillet", rows: ["*trim offset *arrayrect offsetedge erase stretch scale join", "convmesh pedit splineedit reverse *draworder"] },
  { title: "Visualize", block: "!checker !*light", rows: [] },
];

function Section({ title, block, rows, first }: { title: string; block: string; rows: string[]; first?: boolean }) {
  return (
    <SectionBox $first={first}>
      <SectionHead $first={first}>
        <Caret $w={8} $h={5} />
        <SectionName>{title}</SectionName>
        <Icon name="gear" size={9} />
      </SectionHead>
      <ToolBlock>{block.split(" ").map((t) => <ToolTile key={t} spec={t} />)}</ToolBlock>
      {rows.map((r) => <ToolRow key={r}>{r.split(" ").map((t) => <ToolTile key={t} spec={t} />)}</ToolRow>)}
    </SectionBox>
  );
}

const EndRule = styled.hr`
  width: 176px;
  height: 1px;
  margin: 0 4px;
  border: 0;
  background: ${C.line};
`;

const ChevSvg = styled.svg`
  display: block;
`;
const Chevrons = ({ dir }: { dir: 1 | -1 }) => (
  <ChevSvg width="8" height="7" viewBox="0 0 8 7">
    <path d={dir === 1 ? "M.5.5L3.500 3.500.5 6.500M4.500.5l3 3-3 3" : "M3.500.5L.5 3.500l3 3M7.500.5l-3 3 3 3"} fill="none" stroke="#a0a0a0" />
  </ChevSvg>
);

/* ---------- workspace ---------- */
const Work = styled.div`
  display: grid;
  min-width: 0;
  min-height: 0;
  grid-template: minmax(0, 1fr) 24px / 1500px minmax(0, 1fr);
`;
const Stage = styled.main`
  display: flex;
  flex-direction: column;
  min-height: 0;
`;
const FileTabs = styled.nav`
  display: flex;
  height: 24px;
  border: solid ${C.line};
  border-width: 1px 0 1px 1px;
`;
const FileCell = styled.button<{ $w: number }>`
  width: ${(p) => p.$w}px;
  display: grid;
  place-items: center;
  padding-right: 1px;
  border-right: 1px solid ${C.line};
`;
const FileTab = styled.button<{ $on?: boolean; $w: number }>`
  width: ${(p) => p.$w}px;
  padding-left: 3px;
  text-align: left;
  font: ${(p) => (p.$on ? "11.500px" : "11.200px")} ${HELV};
  letter-spacing: ${(p) => (p.$on ? "-0.05px" : "-0.2px")};
  color: ${(p) => (p.$on ? "#fff" : "#a0a0a0")};
  background: ${(p) => (p.$on ? "#626262" : "transparent")};
  border-right: 1px solid ${C.line};
`;
const Canvas = styled.div`
  position: relative;
  flex: 1;
  min-height: 0;
  background: ${C.canvas};
`;
const Scene = styled.svg`
  position: absolute;
  inset: 0;
`;
const ViewLabel = styled.div`
  position: absolute;
  left: 15px;
  top: 3px;
  display: flex;
  align-items: center;
  height: 16px;
  letter-spacing: 0.45px;
  color: #a9a9a9;
  -webkit-text-stroke: 0.2px #a9a9a9;
`;
const ViewPart = styled.span<{ $w: number }>`
  width: ${(p) => p.$w}px;
`;
const ViewBar = styled.span`
  width: 1px;
  height: 13px;
  margin-right: 5px;
  background: #a9a9a9;
`;
const Wcs = styled.div`
  position: absolute;
  left: 1393px;
  top: 170px;
  width: 50px;
  height: 12px;
  display: flex;
  align-items: center;
  gap: 8px;
  padding-left: 4px;
  border-radius: 3px;
  background: #66747c;
  color: #20282f;
  font: 10.500px/12px ${HELV};
  -webkit-text-stroke: 0.2px #20282f;
`;
const Command = styled.div`
  position: absolute;
  left: 500px;
  bottom: 2px;
  width: 498px;
  height: 23px;
  display: flex;
  align-items: center;
  background: #484848;
  color: #a4a4a4;
`;
const Prompt = styled.div`
  width: 39px;
  height: 100%;
  display: flex;
  align-items: center;
  gap: 3px;
  padding-left: 8px;
  background: #3b3b3b;
  color: #c8c8c8;
`;
const Typed = styled.span`
  flex: 1;
  padding-left: 5px;
  font-style: italic;
  letter-spacing: 0.25px;
`;
const UpMark = styled.i`
  margin-right: 4px;
  border: solid transparent;
  border-width: 0 3px 4px;
  border-bottom-color: #aaa;
`;

/* ---------- model ---------- */
const OX = 184;
const OY = 54;
const SEG = 25;
type Pt = [number, number];

function ring(cx: number, cy: number, rx: number, ry: number): Pt[] {
  return Array.from({ length: SEG }, (_, i) => {
    const a = ((i * 360) / SEG + 9) * (Math.PI / 180);
    return [cx + rx * Math.sin(a), cy + ry * Math.cos(a)] as Pt;
  });
}
const poly = (p: Pt[]) => p.map(([x, y]) => `${x.toFixed(1)},${y.toFixed(1)}`).join(" ");

interface Cyl { cx: number; cy: number; rx: number; ry: number; h: number; from?: number; to?: number; id: string }

/* Side wall of a cylinder, optionally cut between two vertical seams. */
function Wall({ c }: { c: Cyl }) {
  const pts = ring(c.cx, c.cy, c.rx, c.ry);
  const front = pts.filter((p) => p[1] >= c.cy - c.ry * 0.12).sort((a, b) => a[0] - b[0]);
  const lower = front.map(([x, y]) => [x, y + c.h] as Pt);
  const outline = [...front, ...lower.slice().reverse()];
  const x0 = c.from ?? c.cx - c.rx - 3;
  const x1 = c.to ?? c.cx + c.rx + 3;
  return (
    <g clipPath={`url(#clip-${c.id})`}>
      <clipPath id={`clip-${c.id}`}><rect x={x0} y={c.cy - c.ry - 5} width={x1 - x0} height={c.h + 2 * c.ry + 12} /></clipPath>
      <linearGradient id={`g-${c.id}`} gradientUnits="userSpaceOnUse" x1={c.cx - c.rx} x2={c.cx + c.rx} y1="0" y2="0">
        <stop offset="0" stopColor="#d3d3d1" /><stop offset="0.13" stopColor="#d0d0cf" />
        <stop offset="0.28" stopColor="#c4c4cc" /><stop offset="0.46" stopColor="#aeadcb" />
        <stop offset="0.63" stopColor="#9b9ac8" /><stop offset="0.76" stopColor="#8281c2" />
        <stop offset="0.89" stopColor="#6665bd" /><stop offset="1" stopColor="#4b4ab9" />
      </linearGradient>
      <polygon points={poly(outline)} fill={`url(#g-${c.id})`} stroke="#fff" strokeWidth="2" />
    </g>
  );
}
function Cap({ c }: { c: Cyl }) {
  const pts = ring(c.cx, c.cy, c.rx, c.ry);
  return <polygon points={poly(pts)} fill={CAP} stroke="#fff" strokeWidth={1.5} />;
}
const Full = ({ c }: { c: Cyl }) => <g><Wall c={c} /><Cap c={c} /></g>;

const BIG_A: Cyl = { id: "a", cx: 689, cy: 357.5, rx: 129, ry: 75, h: 106.500, to: 807.5 };
const SMALL_B: Cyl = { id: "b", cx: 840, cy: 371, rx: 46, ry: 26.500, h: 106.500, from: 807 };
const PIN_C: Cyl = { id: "c", cx: 900, cy: 405.500, rx: 15, ry: 9, h: 106 };
const MID_D: Cyl = { id: "d", cx: 933.700, cy: 499, rx: 97.5, ry: 56.500, h: 106.500 };
const PIN_E: Cyl = { id: "e", cx: 772.500, cy: 479, rx: 15, ry: 9, h: 106 };
const PIN_F: Cyl = { id: "f", cx: 967.500, cy: 591.500, rx: 15, ry: 9, h: 106 };
const PIN_G: Cyl = { id: "g", cx: 1093.700, cy: 518.500, rx: 15, ry: 9, h: 106 };
const SMALL_H: Cyl = { id: "h", cx: 1028, cy: 626.500, rx: 46, ry: 26.500, h: 106.500, to: 1050 };
const BIG_I: Cyl = { id: "i", cx: 1178.500, cy: 639.5, rx: 129, ry: 75, h: 106.500 };

const CAP = "#e5e6d4";

function Model() {
  return (
    <g shapeRendering="crispEdges">
      <Wall c={SMALL_B} /><Wall c={BIG_A} />
      <path d="M807.500 389v107" stroke="#fff" />
      <Cap c={SMALL_B} /><Cap c={BIG_A} />
      <polygon points="812,350 818,349 822,360 822,374 812,385 805,384" fill={CAP} />
      <path d="M811 351l7-3M803 385.500l4.500 3.500" stroke="#fff" fill="none" />
      <Full c={PIN_C} />
      <Full c={MID_D} />
      <Full c={PIN_G} />
      <Full c={PIN_E} />
      <Full c={PIN_F} />
      <Wall c={SMALL_H} /><Wall c={BIG_I} />
      <Cap c={SMALL_H} /><Cap c={BIG_I} />
      <polygon points="1052,617 1060,609 1066,608 1072,620 1066,640 1051,649 1047,640" fill={CAP} />
    </g>
  );
}

function ViewCube() {
  const letter = { fontFamily: '"Open Sans", sans-serif', fontWeight: 700, fill: "#a9adb0", textAnchor: "middle" as const };
  const face = { fontFamily: '"Open Sans", sans-serif', fontWeight: 700, fill: "#4f5458", textAnchor: "middle" as const, fontSize: 12 };
  return (
    <g>
      <radialGradient id="cube-glow"><stop offset="0.4" stopColor="#3c454e" /><stop offset="1" stopColor={C.canvas} stopOpacity="0" /></radialGradient>
      <path fillRule="evenodd" fill="#495058" stroke="#3b424b" strokeWidth="0.6" d={o(1602, 162, 64.500, 42.500) + o(1602, 161, 49, 31)} />
      <ellipse cx="1602" cy="162" rx="42" ry="28" fill="url(#cube-glow)" />
      <text {...letter} fontSize="18" transform="translate(1560 136) rotate(28) skewX(-14) scale(.9 .8)">W</text>
      <text {...letter} fontSize="18" transform="translate(1643 138) rotate(-28) skewX(20) scale(.9 .8)">N</text>
      <text {...letter} fontSize="23" transform="translate(1553 192) rotate(24) skewX(-30) scale(.95 .85)">S</text>
      <text {...letter} fontSize="23" transform="translate(1652 193) rotate(-32) skewX(14) scale(1.050 .95)">E</text>
      <linearGradient id="cube-f" x1="0" x2="0" y1="0" y2="1"><stop offset="0" stopColor="#b2b3b5" /><stop offset="1" stopColor="#9c9ea0" /></linearGradient>
      <path d="M1602 98l34.700 16.300L1602 134.700l-35-20.400z" fill="#b4b6b8" />
      <path d="M1567 114.300l35 20.400V175l-32.700-21z" fill="url(#cube-f)" />
      <path d="M1636.700 114.300L1602 134.700V175l32.700-21z" fill="url(#cube-f)" />
      <path d="M1602 127.500l7 4v7l-7 4-7-4v-7z" fill="#9199a3" opacity="0.55" />
      <path d="M1602 98l34.700 16.300-2 39.700-32.700 21-32.700-21-2.300-39.700zM1567 114.300l35 20.400 34.700-20.400M1602 134.700V175" fill="none" stroke="#66696c" />
      <text {...face} transform="matrix(.75 .36 -.6 .42 1600 118)">TOP</text>
      <text {...face} transform="matrix(.6 .33 .03 1 1584.500 149.500)">FRONT</text>
      <text {...face} transform="matrix(.6 -.33 -.03 1 1619.500 149)">RIGHT</text>
    </g>
  );
}

function Triad() {
  const t = { fontFamily: "Lato, sans-serif", fontWeight: 300, fontSize: 17, textAnchor: "middle" as const };
  return (
    <g>
      <path d="M234 1000L269 980" stroke="#3f8a3f" strokeWidth="5" />
      <path d="M234 998.500L268 979" stroke="#62a862" strokeWidth="1.500" />
      <path d="M234.300 999V960" stroke="#38588f" strokeWidth="5" />
      <path d="M234 999V962" stroke="#5b82bd" strokeWidth="1.500" />
      <path d="M232 959.500h4.500v2H232z" fill="#a9d4ff" />
      <path d="M233 999l35.500 20.500" stroke="#d65f60" strokeWidth="5" />
      <path d="M234 998.500l34 19.500" stroke="#ff9494" strokeWidth="1.500" />
      <text {...t} x="239" y="956" fill="#0a5cff">Z</text>
      <text {...t} x="272.500" y="975" fill="#18b418">Y</text>
      <text {...t} x="272.500" y="1015.5" fill="#e62828">X</text>
    </g>
  );
}

function Cursor() {
  return (
    <g strokeWidth="1" fill="none">
      <path d="M476.500 130v58" stroke="#5a4be0" />
      <path d="M461 178.500L510 150" stroke="#4f9a4f" />
      <path d="M461 160.500L510 188.500" stroke="#c25555" />
      <rect x="473.500" y="166.500" width="6" height="6" stroke="#fff" fill={C.canvas} />
    </g>
  );
}

/* ---------- right dock ---------- */
const Dock = styled.aside`
  min-width: 0;
  min-height: 0;
  display: flex;
  flex-direction: column;
`;
const DockTabs = styled.div`
  display: flex;
  height: 24px;
  border-top: 1px solid ${C.line};
`;
const DockTab = styled.button<{ $on?: boolean; $w: number }>`
  width: ${(p) => p.$w}px;
  display: grid;
  place-items: center;
  background: ${(p) => (p.$on ? C.panel : "#434343")};
  border-right: 1px solid ${C.line};
  border-bottom: 1px solid ${(p) => (p.$on ? C.panel : C.line)};
  &:last-child { background: ${C.panel}; border-right: 0; padding-left: 4px; }
`;
const Head = styled.div<{ $h: number }>`
  display: flex;
  align-items: center;
  height: ${(p) => p.$h}px;
  padding: 0 1px 1px 10px;
`;
const Title = styled.h2`
  margin: 0 auto 0 0;
  font: 700 11.500px ${LUCIDA};
  letter-spacing: -0.2px;
  color: #e4e4e4;
`;
const LayerTools = styled.div`
  display: flex;
  gap: 8px;
  height: 30px;
  align-items: center;
  padding-left: 14px;
  margin-bottom: 5px;
`;
const Select = styled.div<{ $h: number; $off?: boolean }>`
  display: flex;
  align-items: center;
  height: ${(p) => p.$h}px;
  padding: 0 4px 0 6px;
  border: 1px solid ${(p) => (p.$off ? "#434343" : "#3e3e3e")};
  border-radius: 2px;
  background: ${(p) => (p.$off ? "#4b4b4b" : "linear-gradient(#565656, #505050)")};
  color: ${(p) => (p.$off ? "#858585" : "#f4f4f4")};
  -webkit-text-stroke: ${(p) => (p.$off ? "0" : "0.3px #f4f4f4")};
  white-space: nowrap;
  letter-spacing: 0.1px;
`;
const Grow = styled.span`
  flex: 1;
`;
const Dot = styled.i`
  width: 8px;
  height: 8px;
  border-radius: 50%;
  background: #cfcfcf;
`;
const Swatch = styled.i`
  flex: none;
  width: 9px;
  height: 9px;
  border: 1px solid #000;
  background: #fff;
`;
const Faded = styled.span`
  opacity: 0.16;
`;
const LayerPick = styled.div`
  display: flex;
  align-items: center;
  flex: 1;
  padding-left: 4px;
  gap: 4px;
`;
const LayerName = styled.span`
  margin-left: 5px;
`;
const Stack = styled.div`
  display: flex;
  flex-direction: column;
  gap: 3px;
  padding: 0 4px 0 11px;
`;
const HideRow = styled.div`
  display: flex;
  align-items: center;
  gap: 12px;
  height: 28px;
  padding: 0 0 2px 14px;
  letter-spacing: 0.15px;
  color: #c2c2c2;
`;
const Table = styled.div`
  height: 213px;
  margin: 0 5px 0 10px;
  border: 1px solid #343434;
  border-right: 0;
  background: #484848;
`;
const HeadRow = styled.div`
  display: grid;
  grid-template-columns: 25px 58px 22px 22px 47px 1fr;
  height: 23px;
`;
const HeadCell = styled.div<{ $on?: boolean }>`
  position: relative;
  display: flex;
  align-items: center;
  justify-content: center;
  gap: 1px;
  border-right: 1px solid #383838;
  border-bottom: 1px solid #383838;
  background: ${(p) => (p.$on ? "#383838" : "transparent")};
  font-weight: 700;
  padding-right: ${(p) => (p.$on ? 3 : 0)}px;
  &:last-child { border-right: 0; padding-left: 3px; }
`;
const SortMark = styled.i`
  position: absolute;
  bottom: 0;
  left: 23px;
  border: solid transparent;
  border-width: 0 5px 4px;
  border-bottom-color: #1b93ee;
`;
const LayerRow = styled.div<{ $on?: boolean }>`
  display: grid;
  grid-template-columns: 18px 18px 90px 48px 1fr;
  align-items: center;
  height: 19px;
  padding-left: 7px;
  margin-left: 1px;
  background: ${(p) => (p.$on ? "#717171" : "transparent")};
  color: #fff;
  -webkit-text-stroke: 0.2px;
`;
const Dark = styled.span<{ $on?: boolean }>`
  color: ${(p) => (p.$on ? "#1d1d1d" : "#fff")};
`;
const Stroke = styled.i<{ $w: number }>`
  width: ${(p) => p.$w}px;
  height: 1px;
  background: #fff;
`;
const Scroll = styled.div`
  width: 187px;
  height: 7px;
  margin: 4px 0 0 12px;
  border-radius: 4px;
  background: #5d5d5d;
`;
const ListTools = styled.div`
  display: flex;
  align-items: center;
  height: 29px;
  padding: 3px 0 0 17px;
`;
const Gap = styled.span<{ $w: number }>`
  flex: none;
  width: ${(p) => p.$w}px;
`;
const Minus = styled.i`
  width: 8px;
  height: 2px;
  background: #808080;
`;
const Search = styled.div`
  display: flex;
  align-items: center;
  gap: 4px;
  height: 20px;
  margin: 0 6px 8px 11px;
  padding-left: 6px;
  border-radius: 3px;
  background: #fff;
  color: #b8b8b8;
  font: 12px Inter, ${HELV};
  letter-spacing: 0.1px;
`;
const Toggle = styled.div`
  display: flex;
  margin-right: 8px;
  font-size: 8.500px;
`;
const ToggleOpt = styled.button<{ $on?: boolean; $w: number }>`
  width: ${(p) => p.$w}px;
  height: 15px;
  color: ${(p) => (p.$on ? "#f0f0f0" : "#6c6c6c")};
  background: ${(p) => (p.$on ? "#5e5e5e" : "#3a3a3a")};
`;
const Props = styled.div`
  display: grid;
  grid-auto-rows: 19px;
  row-gap: 4px;
  padding: 7px 8px 0 31px;
`;
const PropRow = styled.div`
  display: grid;
  grid-template-columns: 74px 109px;
  column-gap: 9px;
`;
const PropLabel = styled.span<{ $cut?: boolean }>`
  text-align: ${(p) => (p.$cut ? "left" : "right")};
  line-height: 18px;
  letter-spacing: 0.2px;
  white-space: nowrap;
  color: #cdcdcd;
`;
const Dots = styled.span`
  letter-spacing: 1.2px;
`;
const Pair = styled.div`
  display: flex;
  justify-content: space-between;
`;
const Field = styled.div<{ $off?: boolean; $w?: number }>`
  width: ${(p) => (p.$w ? `${p.$w}px` : "auto")};
  display: flex;
  align-items: center;
  height: 19px;
  padding: 0 6px 0 3px;
  border: 1px solid ${(p) => (p.$off ? "#434343" : "#3c3c3c")};
  border-radius: 1px;
  color: ${(p) => (p.$off ? "#858585" : "#f4f4f4")};
  -webkit-text-stroke: ${(p) => (p.$off ? "0" : "0.2px")};
  letter-spacing: 0.35px;
`;
const Slider = styled(Field)`
  justify-content: flex-end;
  padding-right: 2px;
  background:
    linear-gradient(#2f84d8, #2f84d8) 0 0 / 1px 3px no-repeat,
    linear-gradient(#2f84d8, #2f84d8) 0 100% / 1px 3px no-repeat,
    linear-gradient(#6c6c6c, #6c6c6c) 29px 9px / 1px 5px no-repeat;
`;
const PickButton = styled.button`
  width: 19px;
  height: 19px;
  display: grid;
  place-items: center;
`;

type Row = [label: string, value: string, kind?: "color" | "linetype" | "input" | "off" | "slider" | "height"];
const ROWS: Row[] = [
  ["Color", "ByLayer", "color"],
  ["Layer", "0"],
  ["Linetype", "ByLa...", "linetype"],
  ["Linetype sc...", "1.0000", "input"],
  ["Lineweight", "ByLayer"],
  ["Transparency", "0", "slider"],
  ["Text style", "Standard"],
  ["Dimension...", "Standard"],
  ["Multileader...", "Standard"],
  ["Table style", "Standard"],
  ["Annotation...", "1:1"],
  ["Text height", "0.2000", "height"],
  ["Plot style", "ByColor"],
  ["Plot style ta...", "None"],
  ["Plot style at...", "Model", "off"],
  ["Plot table ty...", "Not available", "off"],
];
const Down = () => <Caret $w={6} $h={4} $c="#d0d0d0" />;

/* Text whose trailing ellipsis is set a little wider than the words. */
function Clipped({ text }: { text: string }) {
  return text.endsWith("...") ? <span>{text.slice(0, -3)}<Dots>...</Dots></span> : <>{text}</>;
}

function PropValue({ value, kind }: { value: string; kind?: Row[2] }) {
  switch (kind) {
    case "color":
      return <Select $h={19}><Gap $w={2} /><Swatch /><Gap $w={11} />{value}<Grow /><Down /></Select>;
    case "linetype":
      return <Select $h={19}><Stroke $w={32} /><Gap $w={14} /><Clipped text={value} /><Grow /><Down /></Select>;
    case "input":
      return <Field>{value}</Field>;
    case "off":
      return <Field $off>{value}</Field>;
    case "slider":
      return <Pair><Gap $w={2} /><Slider $w={64}>{value}</Slider><Gap $w={3} /><Select $h={19}><Icon name="layersmall" size={13} /><Gap $w={8} /><Down /></Select></Pair>;
    case "height":
      return <Pair><Field $w={87}>{value}</Field><PickButton><Icon name="picksize" /></PickButton></Pair>;
    default:
      return <Select $h={19}>{value}<Grow /><Down /></Select>;
  }
}

/* ---------- status bar ---------- */
const Status = styled.footer`
  grid-column: 1 / -1;
  display: flex;
  border: solid ${C.line};
  border-width: 1px 0;
  border-left: 1px solid ${C.line};
  background: ${C.panel};
`;
const LayoutTab = styled.button<{ $on?: boolean; $w: number }>`
  width: ${(p) => p.$w}px;
  display: grid;
  place-items: center;
  padding: 0 2px 1px 0;
  border-right: 1px solid ${C.line};
  background: ${(p) => (p.$on ? "#606060" : "transparent")};
  color: ${(p) => (p.$on ? "#fff" : "#8e8e8e")};
  -webkit-text-stroke: ${(p) => (p.$on ? "0.4px #fff" : "0")};
`;
const StatusRight = styled.div`
  display: flex;
  align-items: center;
  margin-left: auto;
  border-left: 1px solid ${C.line};
`;
const Coords = styled.span`
  width: 159px;
  padding: 0 0 1px 8px;
  font-size: 12.200px;
  white-space: nowrap;
  color: #bdbdbd;
`;
const StatusTool = styled.button<{ $on?: boolean }>`
  width: 20px;
  height: 20px;
  margin: 0 1px;
  display: grid;
  place-items: center;
  background: ${(p) => (p.$on ? "#4a86b8" : "transparent")};
`;
const Scale = styled.span`
  display: flex;
  align-items: center;
  gap: 5px;
  width: 31px;
  font-size: 11.500px;
  color: #c0c0c0;
`;

const TOOLBAR: { icons: string[] }[] = [
  { icons: ["new", "open", "save", "saveas"] },
  { icons: ["undo", "redo"] },
  { icons: ["print", "plot", "pagesetup", "plotstyle"] },
  { icons: ["importf", "exportf", "attach", "savecloud"] },
  { icons: ["zoom", "pan", "orbit"] },
  { icons: ["props", "quickselect", "geolocate", "compare"] },
];
const LAYER_TOOLS = ["laycur", "laymatch", "layprev", "layiso", "layuniso", "layfrz", "layoff", "laylck", "layulk"];
const STATUS: [string, boolean][] = [
  ["grid", false], ["dots", false], ["ortho", true], ["polar", false], ["dyn", false], ["lw", false],
  ["transp", true], ["cycling", true], ["snap3d", true], ["osnap", true], ["anno", true], ["annoauto", false], ["annoscale", false],
];

export default function App() {
  return (
    <Shell>
      <Global />
      <Toolbar>
        {TOOLBAR.map((g) => (
          <ToolGroup key={g.icons[0]}>{g.icons.map((n) => <Icon key={n} name={n} />)}</ToolGroup>
        ))}
      </Toolbar>

      <Palette>
        <PaletteTabs>
          <PaletteTab $w={82}>Drafting</PaletteTab>
          <PaletteTab $on $w={82}>Modeling</PaletteTab>
          <FoldMark><Chevrons dir={-1} /></FoldMark>
        </PaletteTabs>
        {SECTIONS.map((sec, i) => <Section key={sec.title} {...sec} first={i === 0} />)}
        <EndRule />
        <PaletteFoot><Icon name="plus" /><Icon name="listmenu" size={14} /></PaletteFoot>
      </Palette>

      <Work>
        <Stage>
          <FileTabs>
            <FileCell $w={24}><Icon name="viewtiles" /></FileCell>
            <FileCell $w={23}><Icon name="plus" /></FileCell>
            <FileTab $on $w={129}>camera_template</FileTab>
            <FileTab $w={148}>camera_holder_validation</FileTab>
          </FileTabs>
          <Canvas>
            <Scene width="1500" height="997" viewBox={`${OX} ${OY} 1500 997`}>
              <Model />
              <Cursor />
              <Triad />
              <ViewCube />
            </Scene>
            <ViewLabel>
              <ViewPart $w={19}>+</ViewPart><ViewBar />
              <ViewPart $w={77}>SE Isometric</ViewPart><ViewBar />
              <ViewPart $w={70}>Conceptual</ViewPart>
            </ViewLabel>
            <Wcs>WCS
              <svg width="10" height="8" viewBox="0 0 10 8"><path d="M1 1h8L5 6.500z" fill="#8d9aa2" stroke="#2a3239" /></svg>
            </Wcs>
            <Command>
              <Prompt>&gt;_<Caret $w={6} $h={4} /></Prompt>
              <Typed>Type a command</Typed>
              <UpMark />
            </Command>
          </Canvas>
        </Stage>

        <Dock>
          <DockTabs>
            <DockTab $on $w={53}><Icon name="tablayers" /></DockTab>
            <DockTab $w={52}><Icon name="tabref" /></DockTab>
            <DockTab $w={53}><Icon name="tabsheet" /></DockTab>
            <DockTab $w={54} />
            <DockTab $w={19}><Chevrons dir={1} /></DockTab>
          </DockTabs>
          <Head $h={24}><Title>Layers</Title><Icon name="collapse" /></Head>
          <LayerTools>{LAYER_TOOLS.map((n) => <Icon key={n} name={n} />)}</LayerTools>
          <Stack>
            <Select $h={25}>
              <LayerPick>
                <Dot />
                <Faded><Icon name="lock" /></Faded>
                <Faded><Icon name="snow" size={14} /></Faded>
                <Swatch />
                <LayerName>0</LayerName>
              </LayerPick>
              <Down />
            </Select>
            <Select $h={25}>Unsaved Layer State<Grow /><Down /></Select>
          </Stack>
          <HideRow><Caret $w={9} $h={7} $c="#8d8d8d" />Hide Layer List</HideRow>
          <Table>
            <HeadRow>
              <HeadCell><Icon name="eye" size={13} /></HeadCell>
              <HeadCell $on><Icon name="halfbox" size={14} />&nbsp;N...<Icon name="updown" size={14} /><SortMark /></HeadCell>
              <HeadCell><Icon name="snow" size={14} /></HeadCell>
              <HeadCell><Icon name="lock" size={15} /></HeadCell>
              <HeadCell><Icon name="weight" /></HeadCell>
              <HeadCell><Icon name="ltype" /></HeadCell>
            </HeadRow>
            <LayerRow $on><Dot /><Swatch /><Dark $on>0</Dark><Clipped text="D..." /><Stroke $w={32} /></LayerRow>
            <LayerRow><Dot /><Swatch /><Dark><Clipped text="STL2..." /></Dark><Clipped text="D..." /><Stroke $w={32} /></LayerRow>
          </Table>
          <TableFoot />
          <Scroll />
          <ListTools>
            <Icon name="laynew" size={15} /><Gap $w={15} />
            <Icon name="laystate" /><Gap $w={14} />
            <Icon name="folder" /><Gap $w={14} />
            <Icon name="folderadd" /><Gap $w={54} />
            <Minus /><Gap $w={14} />
            <Icon name="columns" /><Down />
          </ListTools>
          <Search>
            <svg width="17" height="14" viewBox="0 0 17 14"><circle cx="5" cy="6" r="4.200" fill="none" stroke="#555" /><path d="M8 9l3 3.500M11.500 5.500l2.200 2 2.200-2" fill="none" stroke="#555" /></svg>
            Search for layer
          </Search>
          <EndRuleWide />
          <Head $h={25}>
            <Title>Properties</Title>
            <Toggle><ToggleOpt $w={28}>All</ToggleOpt><ToggleOpt $on $w={32}>My</ToggleOpt></Toggle>
            <Icon name="editprops" /><Gap $w={9} /><Icon name="collapse" />
          </Head>
          <ModelSpace>
            <Select $h={22} $off>Model Space<Grow /><Caret $w={6} $h={4} $c="#7c7c7c" /></Select>
          </ModelSpace>
          <Props>
            {ROWS.map(([label, value, kind]) => (
              <PropRow key={label}>
                <PropLabel $cut={label.endsWith("...")}><Clipped text={label} /></PropLabel>
                <PropValue value={value} kind={kind} />
              </PropRow>
            ))}
          </Props>
        </Dock>

        <Status>
          <LayoutTab $on $w={60}>Model</LayoutTab>
          <LayoutTab $w={23}><Icon name="plus" /></LayoutTab>
          <LayoutTab $w={59}>Layout1</LayoutTab>
          <StatusRight>
            <Coords>−22.9470, 55.5151, 0.0000</Coords>
            {STATUS.map(([n, on]) => <StatusTool key={n} $on={on}><Icon name={n} /></StatusTool>)}
            <Scale>1:1<Down /></Scale>
            <StatusTool><Icon name="isolate" /></StatusTool>
            <StatusTool><Icon name="gear" size={14} /></StatusTool>
          </StatusRight>
        </Status>
      </Work>
    </Shell>
  );
}

const TableFoot = styled.div`
  height: 1px;
`;
const EndRuleWide = styled.hr`
  width: 100%;
  height: 1px;
  margin: 0;
  border: 0;
  background: ${C.line};
`;
const ModelSpace = styled.div`
  padding: 5px 7px 0 11px;
`;
